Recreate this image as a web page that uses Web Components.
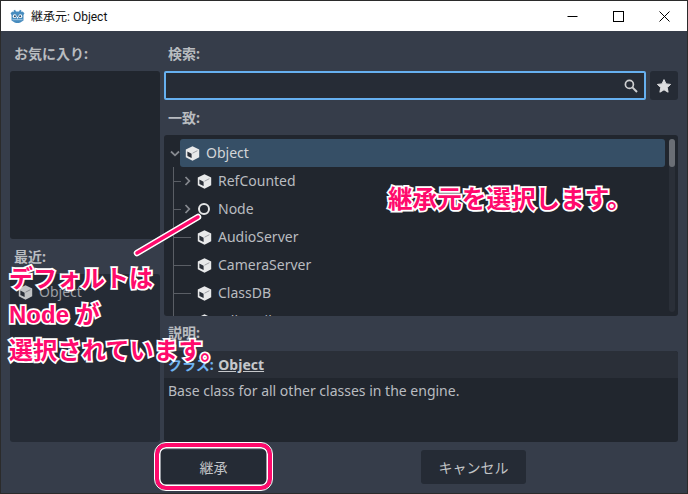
<!DOCTYPE html>
<html lang="ja"><head><meta charset="utf-8">
<style>
html,body{margin:0;padding:0;background:#2b2b2b}
body{width:688px;height:494px;overflow:hidden;font-family:"Noto Sans","Noto Sans CJK JP",sans-serif;font-size:14px;color:#bdbfc3}
</style></head><body>
<script>
const CUBE=`<svg width="15" height="15" viewBox="0 0 15 15" style="margin:0 -.5px"><path d="M7.5 .2 14.2 3.6V11.3L7.5 14.8 .8 11.3V3.6Z" fill="#e8e9ea"/><path d="M6.6 7.7 2.4 5.5V9.9L6.6 12.1Z" fill="#2a2f38"/><path d="M7.5 7.2 12.4 4.7" stroke="#8e9196" stroke-width=".8"/></svg>`;
const CHEV_R=`<svg width="7" height="10" viewBox="0 0 7 10"><path d="M1.5 1 5.3 5 1.5 9" fill="none" stroke="#85888e" stroke-width="1.8"/></svg>`;
const CHEV_D=`<svg width="10" height="7" viewBox="0 0 10 7"><path d="M1 1.5 5 5.3 9 1.5" fill="none" stroke="#85888e" stroke-width="1.8"/></svg>`;
const def=(n,css,html)=>customElements.define(n,class extends HTMLElement{
  connectedCallback(){ if(this.shadowRoot) return; const s=this.attachShadow({mode:'open'}); s.innerHTML=`<style>${css}</style>`+(typeof html==='function'?html(this):html); }
});
def('x-titlebar',`:host{display:flex;align-items:center;height:30px;background:#fff;color:#111;font:12px Roboto,"Noto Sans CJK JP",sans-serif;flex:none}
 .ic{margin:0 6px 0 9px;display:flex}.t{flex:1;position:relative;top:-1px}
 .b{width:46px;height:30px;display:flex;align-items:center;justify-content:center}`,
 `<span class="ic"><svg width="15" height="15" viewBox="0 0 16 16"><path d="M5.4 .8 6.4 2.6H9.6L10.6 .8 12.2 1.5 12 3.3 13.4 2.6 15.4 4.6 14.4 6.4V12.2C12 13.8 10 15 8 15S4 13.8 1.6 12.2V6.4L.6 4.6 2.6 2.6 4 3.3 3.8 1.5Z" fill="#478cbf"/><circle cx="5" cy="7.6" r="2" fill="#fff"/><circle cx="11" cy="7.6" r="2" fill="#fff"/><circle cx="5.2" cy="7.8" r="1.1" fill="#2a4a66"/><circle cx="10.8" cy="7.8" r="1.1" fill="#2a4a66"/><path d="M2.6 11.4H13.4" stroke="#a8cbe4" stroke-width="1"/><path d="M7.4 8.4H8.6V10H7.4Z" fill="#fff"/></svg></span><span class="t"><slot></slot></span>
 <span class="b"><svg width="11" height="11" viewBox="0 0 11 11"><path d="M.5 5.5H10.5" stroke="#000"/></svg></span>
 <span class="b"><svg width="11" height="11" viewBox="0 0 11 11"><rect x=".5" y=".5" width="10" height="10" fill="none" stroke="#000"/></svg></span>
 <span class="b"><svg width="11" height="11" viewBox="0 0 11 11"><path d="M.5 .5 10.5 10.5M10.5 .5 .5 10.5" stroke="#000" stroke-width="1"/></svg></span>`);
def('x-label',`:host{display:block;height:20px;line-height:20px;font-weight:700;font-size:14px;color:#b9bcc0;margin-bottom:7px;padding-left:4px;white-space:nowrap}`,`<slot></slot>`);
def('x-panel',`:host{display:block;background:var(--bg,#21262e);border-radius:3px;overflow:hidden;box-sizing:border-box}`,`<slot></slot>`);
def('x-search',`:host{display:flex;gap:4px;height:29px}
 .in{flex:1;box-sizing:border-box;background:#262c36;border:2px solid #66b0f0;border-radius:2px;display:flex;align-items:center;justify-content:flex-end;padding-right:6px}
 .fav{width:28px;background:#252b35;border-radius:3px;display:flex;align-items:center;justify-content:center}`,
 `<div class="in"><svg width="14" height="14" viewBox="0 0 14 14"><circle cx="5.4" cy="5.4" r="4" fill="none" stroke="#cfd0d2" stroke-width="1.7"/><path d="M8.4 8.4 13 13" stroke="#cfd0d2" stroke-width="2"/></svg></div>
 <div class="fav"><svg width="14" height="14" viewBox="0 0 14 14"><path d="M7 .6 9 4.9 13.6 5.4 10.2 8.5 11.1 13.2 7 10.8 2.9 13.2 3.8 8.5 .4 5.4 5 4.9Z" fill="#dcdddf" stroke="#dcdddf" stroke-linejoin="round"/></svg></div>`);
def('x-row',`:host{display:block;height:28px;position:relative;white-space:nowrap;color:#b9bcc0}
 .r{height:28px;display:flex;align-items:center;box-sizing:border-box;padding-left:var(--pad,33px);gap:7px}
 .lb{position:relative;top:-1px}
 :host([sel]) .r{background:#364f66;border-radius:3px}
 :host([sel]) {color:#d3d5d8}
 .ch{position:absolute;left:var(--chx,20px);top:9px;display:flex}
 .v,.h{position:absolute;background:#5a5e65}
 .v{left:3px;width:1px;top:0;bottom:0}
 .h{left:4px;top:14px;height:1px}
 .dot{width:12px;height:12px;box-sizing:border-box;border:2px solid #e4e5e6;border-radius:50%;margin:0 1px}`,
 t=>{const ic=t.hasAttribute('node')?'<span class="dot"></span>':CUBE;
   let g='';
   if(t.hasAttribute('tree')) g+='<i class="v"></i>';
   const a=t.getAttribute('arrow');
   if(t.hasAttribute('tree')) g+=`<i class="h" style="width:${a!==null?7:17}px"></i>`;
   if(a==='r') g+=`<span class="ch">${CHEV_R}</span>`;
   if(a==='d') g+=`<span class="ch" style="top:11px;left:-10px">${CHEV_D}</span>`;
   return g+`<div class="r">${ic}<span class="lb"><slot></slot></span></div>`});
def('x-btn',`:host{display:flex;align-items:center;justify-content:center;width:105px;height:34px;background:#252b35;border-radius:3px;color:#c1c3c6;font-size:14px;box-sizing:border-box}`,`<slot></slot>`);
def('x-note',`:host{position:absolute;display:block;white-space:nowrap;font:700 24px/36px "Liberation Sans","Noto Sans CJK JP",sans-serif;color:#ff0a6c;-webkit-text-stroke:3.5px #fff;paint-order:stroke fill}`,`<slot></slot>`);
def('x-mark',`:host{position:absolute;display:block;box-sizing:border-box;border:4px solid #ff0a6c;border-radius:11px;outline:1.5px solid #fff;box-shadow:inset 0 0 0 1.5px #fff}`,``);
def('x-pointer',`:host{position:absolute;left:0;top:0;display:block;width:688px;height:494px;pointer-events:none}`,
 `<svg width="688" height="494"><path d="M198 217 137 253" stroke="#fff" stroke-width="6.5" stroke-linecap="round"/><path d="M198 217 137 253" stroke="#ff0a6c" stroke-width="3.5" stroke-linecap="round"/></svg>`);
def('x-window',`:host{display:flex;flex-direction:column;position:absolute;left:1px;top:1px;width:686px;height:492px;background:#363d4a;overflow:hidden}
 .main{flex:1;display:grid;grid-template-columns:150px 514px;column-gap:4px;padding:13px 9px 0;align-content:start}
 .col{display:flex;flex-direction:column}`,
 `<slot name="title"></slot><div class="main"><div class="col"><slot name="left"></slot></div><div class="col"><slot name="right"></slot></div></div><slot name="foot"></slot>`);
def('x-foot',`:host{display:flex;justify-content:space-between;padding:0 161px 0 160px;height:43px;box-sizing:border-box;flex:none}`,`<slot></slot>`);
def('x-tree',`:host{display:block;position:relative;height:181px;background:#21262e;border-radius:3px;overflow:hidden}
 .body{padding:4px 13px 0 6px}
 .sb{position:absolute;left:505px;top:4px;bottom:4px;width:6px;background:#2a2f38;border-radius:3px}
 .th{width:6px;height:28px;background:#6a6e75;border-radius:3px}`,
 `<div class="body"><slot></slot></div><div class="sb"><div class="th"></div></div>`);
def('x-desc',`:host{display:block;height:91px;background:#21262e;border-radius:3px;overflow:hidden}
 .hd{height:27px;background:#2a2f38;padding-left:4px;line-height:27px;font-weight:700;color:#c6c8cb;white-space:nowrap}
 .c{color:#6fb4f2}.o{text-decoration:underline;margin-left:1px}
 .bd{padding:3px 4px;line-height:20px;color:#b9bcc0;white-space:nowrap}`,
 `<div class="hd"><span class="c">クラス:</span> <span class="o">Object</span></div><div class="bd"><slot></slot></div>`);
</script>
<x-window>
 <x-titlebar slot="title">継承元: Object</x-titlebar>
 <x-label slot="left">お気に入り:</x-label>
 <x-panel slot="left" style="height:168px;margin-bottom:8px"></x-panel>
 <x-label slot="left">最近:</x-label>
 <x-panel slot="left" style="height:168px;--bg:#252b35;padding-top:4px"><x-row style="--pad:8px;opacity:.8">Object</x-row></x-panel>

 <x-label slot="right">検索:</x-label>
 <x-search slot="right" style="margin-bottom:8px"></x-search>
 <x-label slot="right">一致:</x-label>
 <x-tree slot="right" style="margin-bottom:7px">
  <x-row sel arrow="d" style="--pad:5px;margin-left:10px;width:485px">Object</x-row>
  <x-row tree arrow="r" style="--pad:27px;--chx:14px">RefCounted</x-row>
  <x-row tree arrow="r" node style="--pad:27px;--chx:14px">Node</x-row>
  <x-row tree style="--pad:27px">AudioServer</x-row>
  <x-row tree style="--pad:27px">CameraServer</x-row>
  <x-row tree style="--pad:27px">ClassDB</x-row>
  <x-row tree style="--pad:27px">EditorFileSystem</x-row>
 </x-tree>
 <x-label slot="right" style="margin-bottom:8px">説明:</x-label>
 <x-desc slot="right">Base class for all other classes in the engine.</x-desc>

 <x-foot slot="foot"><x-btn>継承</x-btn><x-btn>キャンセル</x-btn></x-foot>
</x-window>
<x-pointer></x-pointer>
<x-mark style="left:155px;top:443px;width:117px;height:47px"></x-mark>
<x-note style="left:388px;top:182px;font-size:24.6px">継承元を選択します。</x-note>
<x-note style="left:9px;top:261px">デフォルトは</x-note>
<x-note style="left:9px;top:297px">Node が</x-note>
<x-note style="left:9px;top:333px;letter-spacing:.3px">選択されています。</x-note>
</body></html>
